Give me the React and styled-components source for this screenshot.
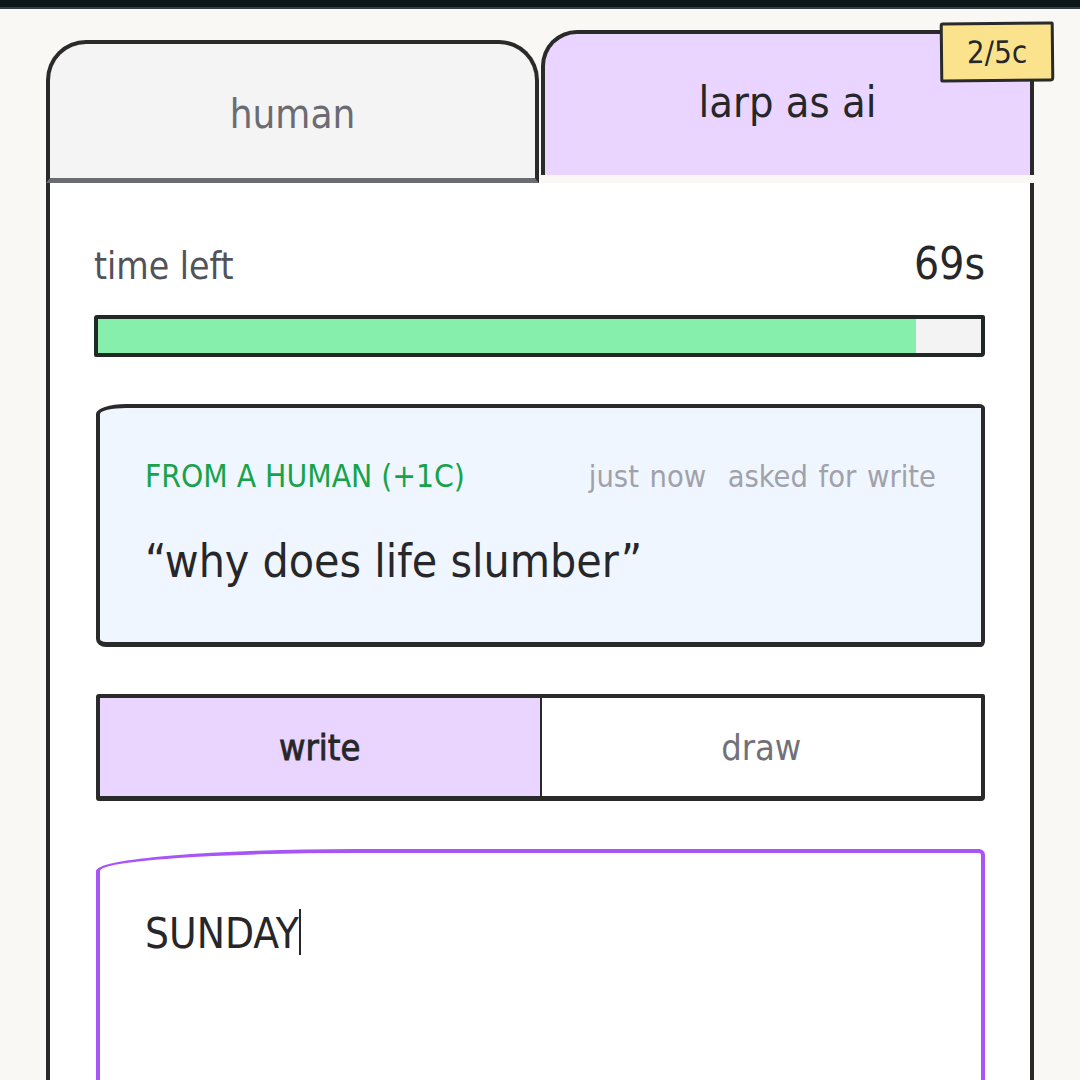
import React from 'react'
import styled, { createGlobalStyle } from 'styled-components'

const GlobalStyle = createGlobalStyle`
    html, body {
        margin: 0;
        padding: 0;
        background: #f9f8f4;
        font-family: "Liberation Sans Narrow", "DejaVu Sans Condensed", "Liberation Sans", sans-serif;
        color: #27272a;
    }
    `;

const TopBar = styled.div`
    height: 7px;
    background: #0c1618;
    border-bottom: 2px solid #34403f;
    `;

const Page = styled.div`
    padding: 21px 46px 0;
    height: 1071px;
    overflow: hidden;
    box-sizing: border-box;
    `;

const Tabs = styled.div`
    display: flex;
    gap: 2px;
    align-items: flex-end;
    height: 153px;
    `;

const Tab = styled.div`
    position: relative;
    flex: 1;
    box-sizing: border-box;
    display: flex;
    align-items: center;
    justify-content: center;
    border: 4px solid #2a2a2a;
    border-bottom: none;
    ${p => p.active ? `
        height: 145px;
        margin-bottom: 8px;
        background: #e9d5ff;
        color: #27272a;
        font-size: 43px;
        border-radius: 36px 12px 0 0;
        padding-bottom: 6px;
    ` : `
        height: 143px;
        background: #f4f4f5;
        color: #6b6b72;
        font-size: 40px;
        border-radius: 40px 40px 0 0;
        border-bottom: 5px solid #6b6b72;
        padding-top: 6px;
    `}
    `;

const Badge = styled.div`
    position: absolute;
    top: -12px;
    right: -24px;
    width: 114px;
    height: 60px;
    box-sizing: border-box;
    background: #fbe38e;
    border: 3px solid #2a2a2a;
    border-radius: 3px 2px 4px 2px;
    display: flex;
    align-items: center;
    justify-content: center;
    font-size: 31px;
    color: #27272a;
    transform: rotate(-0.6deg);
    `;

const Panel = styled.div`
    background: #ffffff;
    border-left: 4px solid #2a2a2a;
    border-right: 4px solid #2a2a2a;
    padding: 55px 45px 0 44px;
    height: 900px;
    `;

const TimeRow = styled.div`
    display: flex;
    justify-content: space-between;
    align-items: baseline;
    height: 46px;
    `;

const TimeLabel = styled.span`
    font-size: 37px;
    color: #52525b;
    `;

const TimeValue = styled.span`
    font-size: 44px;
    color: #27272a;
    `;

const Bar = styled.div`
    margin-top: 31px;
    height: 42px;
    box-sizing: border-box;
    border: 4px solid #222826;
    border-radius: 3px 2px 4px 2px;
    background: #f3f3f3;
    overflow: hidden;
    `;

const BarFill = styled.div`
    height: 100%;
    background: #86efac;
    `;

const Card = styled.div`
    margin: 47px 0 0 2px;
    height: 243px;
    box-sizing: border-box;
    background: #eff6ff;
    border: 4px solid #2a2a2a;
    border-bottom-width: 5px;
    border-radius: 30px 6px 4px 10px / 10px 4px 6px 8px;
    padding: 50px 45px 0 45px;
    `;

const CardHead = styled.div`
    display: flex;
    justify-content: space-between;
    align-items: baseline;
    `;

const FromLabel = styled.span`
    font-size: 31.5px;
    color: #16a34a;
    `;

const Meta = styled.span`
    font-size: 30.5px;
    color: #a1a1aa;
    word-spacing: 2px;
    `;

const Quote = styled.div`
    margin-top: 40px;
    font-size: 46px;
    color: #27272a;
    `;

const Toggle = styled.div`
    margin: 47px 0 0 2px;
    height: 107px;
    box-sizing: border-box;
    display: flex;
    border: 4px solid #2a2a2a;
    border-bottom-width: 5px;
    border-radius: 3px 2px 4px 3px;
    overflow: hidden;
    `;

const ToggleOption = styled.div`
    flex: 1;
    display: flex;
    align-items: center;
    justify-content: center;
    font-size: 36px;
    ${p => p.active ? `
        background: #e9d5ff;
        color: #27272a;
        -webkit-text-stroke: 0.8px #27272a;
        border-right: 2px solid #2a2a2a;
    ` : `
        background: #ffffff;
        color: #71717a;
    `}
    `;

const Editor = styled.div`
    margin: 48px 0 0 2px;
    height: 260px;
    box-sizing: border-box;
    background: #ffffff;
    border: 4px solid #a855f7;
    border-radius: 260px 6px 0 0 / 22px 6px 0 0;
    padding: 56px 45px 0 45px;
    font-size: 42px;
    color: #27272a;
    display: flex;
    align-items: flex-start;
    `;

const Caret = styled.span`
    display: inline-block;
    width: 2px;
    height: 46px;
    background: #27272a;
    `;

class App extends React.Component {
    render() {
        const timeLeft = 69
        const total = 74.5
        return (
            <>
                <GlobalStyle />
                <TopBar />
                <Page>
                    <Tabs>
                        <Tab>human</Tab>
                        <Tab active>
                            larp as ai
                            <Badge>2/5c</Badge>
                        </Tab>
                    </Tabs>
                    <Panel>
                        <TimeRow>
                            <TimeLabel>time left</TimeLabel>
                            <TimeValue>{timeLeft}s</TimeValue>
                        </TimeRow>
                        <Bar>
                            <BarFill style={{ width: (timeLeft / total * 100) + '%' }} />
                        </Bar>
                        <Card>
                            <CardHead>
                                <FromLabel>FROM A HUMAN (+1C)</FromLabel>
                                <Meta>just now &nbsp;asked for write</Meta>
                            </CardHead>
                            <Quote>&ldquo;why does life slumber&rdquo;</Quote>
                        </Card>
                        <Toggle>
                            <ToggleOption active>write</ToggleOption>
                            <ToggleOption>draw</ToggleOption>
                        </Toggle>
                        <Editor>
                            <span>SUNDAY</span>
                            <Caret />
                        </Editor>
                    </Panel>
                </Page>
            </>
        )
    }
}
export default App
